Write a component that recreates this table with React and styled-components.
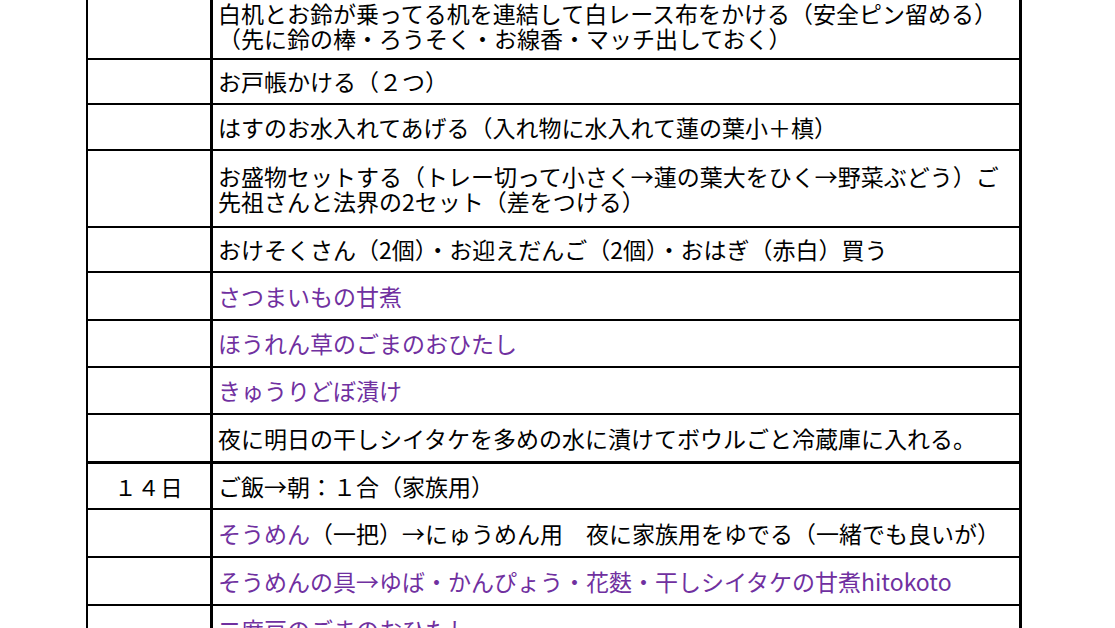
import styled, { createGlobalStyle } from 'styled-components';

const GlobalStyle = createGlobalStyle`
  html, body {
    margin: 0;
    padding: 0;
    background: #fff;
    overflow: hidden;
  }
  body {
    font-family: "Noto Sans CJK JP", "Noto Sans", sans-serif;
    color: #000;
  }
`;

const rows = [
  { h: 67, lines: ['白机とお鈴が乗ってる机を連結して白レース布をかける（安全ピン留める）', '（先に鈴の棒・ろうそく・お線香・マッチ出しておく）'] },
  { h: 45, lines: ['お戸帳かける（２つ）'] },
  { h: 46, lines: ['はすのお水入れてあげる（入れ物に水入れて蓮の葉小＋槙）'] },
  { h: 77, lines: ['お盛物セットする（トレー切って小さく→蓮の葉大をひく→野菜ぶどう）ご', '先祖さんと法界の2セット（差をつける）'] },
  { h: 45, lines: ['おけそくさん（2個）・お迎えだんご（2個）・おはぎ（赤白）買う'] },
  { h: 48, purple: true, lines: ['さつまいもの甘煮'] },
  { h: 47, purple: true, lines: ['ほうれん草のごまのおひたし'] },
  { h: 47, purple: true, lines: ['きゅうりどぼ漬け'] },
  { h: 48, lines: ['夜に明日の干しシイタケを多めの水に漬けてボウルごと冷蔵庫に入れる。'] },
  { h: 47, thick: true, day: '１４日', lines: ['ご飯→朝：１合（家族用）'] },
  { h: 48, mixed: true },
  { h: 48, purple: true, lines: ['そうめんの具→ゆば・かんぴょう・花麩・干しシイタケの甘煮hitokoto'] },
  { h: 48, purple: true, lines: ['二度豆のごまのおひたし'] },
];

export default function App() {
  return (
    <>
      <GlobalStyle />
      <Sheet>
        <Table>
          {rows.map((row, i) => (
            <Row key={i} $h={row.h} $thick={row.thick}>
              <Day>{row.day}</Day>
              <Task $purple={row.purple}>
                {row.mixed ? (
                  <Line>
                    <Purple>そうめん</Purple>（一把）→にゅうめん用　夜に家族用をゆでる（一緒でも良いが）
                  </Line>
                ) : (
                  row.lines.map((t, j) => <Line key={j}>{t}</Line>)
                )}
              </Task>
            </Row>
          ))}
        </Table>
      </Sheet>
    </>
  );
}

const Sheet = styled.div`
  width: 1115px;
  height: 628px;
  overflow: hidden;
  background: #fff;
`;

const Table = styled.div`
  width: 936px;
  margin: -9px 0 0 86px;
  box-sizing: border-box;
  border-left: 2px solid #000;
  border-right: 3px solid #000;
`;

const Row = styled.div`
  display: grid;
  grid-template-columns: 125px 1fr;
  height: ${(p) => p.$h}px;
  box-sizing: border-box;
  border-top: ${(p) => (p.$thick ? 3 : 2)}px solid #000;
`;

const Day = styled.div`
  display: flex;
  align-items: center;
  justify-content: center;
  border-right: 3px solid #000;
  font-size: 22px;
  letter-spacing: 1px;
`;

const Task = styled.div`
  display: flex;
  flex-direction: column;
  justify-content: center;
  padding: 0 5px;
  font-size: 23px;
  line-height: 25px;
  white-space: nowrap;
  color: ${(p) => (p.$purple ? '#7030a0' : '#000')};
`;

const Line = styled.div``;

const Purple = styled.span`
  color: #7030a0;
`;
